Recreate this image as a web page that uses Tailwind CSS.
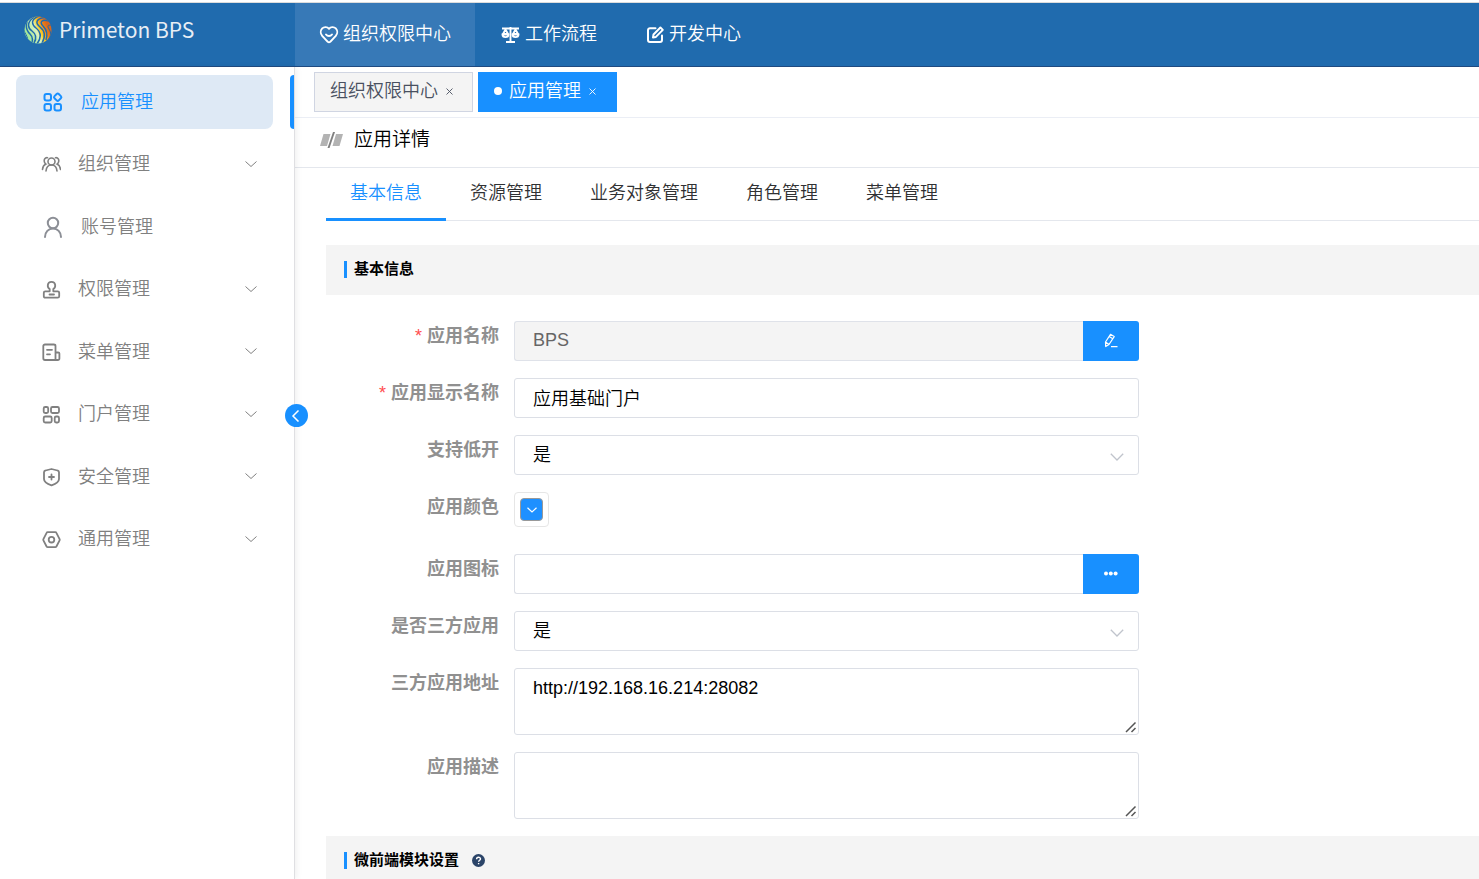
<!DOCTYPE html>
<html lang="zh-CN">
  <head>
    <meta charset="utf-8" />
    <title>Primeton BPS</title>
    <script src="https://cdn.jsdelivr.net/npm/@tailwindcss/browser@4"></script>
  </head>
  <body class="h-screen flex flex-col overflow-hidden bg-white font-['Liberation_Sans','Noto_Sans_CJK_SC',sans-serif] text-[18px] font-[350] text-black">
    <!-- top bar -->
    <header class="shrink-0 flex mt-0.5 h-[65px] border-t border-t-[#dcdcdc] border-b border-b-[#1f4a80] bg-[#206bae] text-white">
      <a href="#" class="w-[295px] shrink-0 flex items-center gap-[7px] pl-6 pb-2.5">
        <svg class="w-7 h-7" viewBox="0 0 28 28" fill="none">
          <defs>
            <linearGradient id="ball" x1="0.15" y1="0.65" x2="0.85" y2="0.35">
              <stop offset="0" stop-color="#a4e89a" />
              <stop offset="0.42" stop-color="#dcf2c0" />
              <stop offset="0.58" stop-color="#f9d02a" />
              <stop offset="0.8" stop-color="#f08a16" />
              <stop offset="1" stop-color="#d9661c" />
            </linearGradient>
            <clipPath id="disc"><circle cx="14" cy="14" r="13.5" /></clipPath>
          </defs>
          <circle cx="14" cy="14" r="13.500" fill="url(#ball)" />
          <g clip-path="url(#disc)" stroke="#206bae" stroke-width="1.500">
            <path d="M15 0C7 3 7 8 12 12s6 9 1 16" />
            <path d="M20 1.500C12 3 11 7 16 11s6 9 2 16" />
            <path d="M25 5c-7-2-10 1-6 5s5 8 3 14" />
            <path d="M10 1C2 7 4 12 8 15s5 7 2 12" />
            <path d="M3 6c-2 6 0 9 3 12s3 5 2 8" />
            <path d="M28 10c-4-2-5 0-3 3s2 5 1 8" stroke-width="1" />
            <path d="M0 14c1 4 3 5 4 10" stroke-width="1" />
          </g>
        </svg>
        <span class="font-['Noto_Sans_CJK_SC',sans-serif] text-[21px] font-normal text-[#e8eef5]">Primeton BPS</span>
      </a>
      <nav class="flex gap-0.5">
        <a href="#" class="flex items-center gap-1 px-6 bg-[#3779b7]">
          <svg class="w-5 h-5" viewBox="0 0 20 20" fill="none" stroke="currentColor" stroke-width="1.900" stroke-linecap="round" stroke-linejoin="round">
            <path d="M10 3.800C8.300 1.600 5 1.600 3.200 3.400 1.300 5.400 1.300 8.700 3.200 10.800c1.800 2 3.800 4.300 5.500 5.900.8.600 1.800.6 2.600 0 1.700-1.600 3.700-3.900 5.500-5.900 1.900-2.100 1.900-5.400 0-7.400C15 1.600 11.700 1.600 10 3.800z" />
            <path d="M7 9.500c1.500 2 4.500 2 6 0" />
          </svg>
          组织权限中心
        </a>
        <a href="#" class="flex items-center gap-1 px-6">
          <svg class="w-5 h-5" viewBox="0 0 20 20" fill="none" stroke="currentColor" stroke-width="1.900">
            <path d="M1 3.500h17M9.500 2v15M5 17h9" />
            <path d="M4.500 4.500L2 9h5zM14.500 4.500L12 9h5z" stroke-linejoin="round" />
            <path d="M1.500 9.500c0 3.500 6 3.500 6 0zM11.500 9.500c0 3.500 6 3.500 6 0z" />
          </svg>
          工作流程
        </a>
        <a href="#" class="flex items-center gap-1 px-6">
          <svg class="w-[18px] h-[18px]" viewBox="0 0 18 18" fill="none" stroke="currentColor" stroke-width="2" stroke-linecap="round" stroke-linejoin="round">
            <path d="M8.500 2.200H3a2 2 0 0 0-2 2V14a2 2 0 0 0 2 2h10a2 2 0 0 0 2-2V9.500" />
            <path d="M6 11.500l.5-3 6.900-7 2.400 2.400-6.900 7z" />
          </svg>
          开发中心
        </a>
      </nav>
    </header>

    <div class="flex flex-1 min-h-0">
      <!-- side menu -->
      <aside class="relative z-10 w-[295px] shrink-0 border-r border-[#dfdfe2] bg-white pt-1 shadow-[2px_0_6px_rgba(0,0,0,0.06)]">
        <span class="absolute right-0 top-2 w-1 h-[54px] rounded-l bg-[#1890ff]"></span>
        <nav class="grid auto-rows-fr items-center min-h-[500px] pl-4 pr-[21px] text-[#808080]">
          <a href="#" class="flex items-center h-[54px] rounded-lg bg-[#dee9f5] pl-[26px] gap-[17px] text-[#1890ff]">
            <svg class="w-[22px] h-[22px]" viewBox="0 0 22 22" fill="none" stroke="currentColor" stroke-width="2">
              <rect x="2.500" y="3" width="6.500" height="6.500" rx="2" />
              <rect x="2.500" y="13" width="6.500" height="6.500" rx="2" />
              <rect x="12.500" y="13" width="6.500" height="6.500" rx="2" />
              <rect x="12.700" y="3.200" width="6" height="6" rx="1.500" transform="rotate(45 15.700 6.200)" />
            </svg>
            <span>应用管理</span>
          </a>
          <a href="#" class="flex items-center h-[54px] pl-[25px] pr-4 gap-[17px]">
            <svg class="w-5 h-5" viewBox="0 0 20 20" fill="none" stroke="currentColor" stroke-width="1.600" stroke-linecap="round">
              <circle cx="10.500" cy="6.500" r="3.500" />
              <path d="M5 16c.3-3.500 2.500-6 5.500-6s5.200 2.500 5.500 6M6.500 2.700C3.800 2.300 2.700 5 3.500 7.200c.3.900.8 1.500 1.400 1.900C2.800 10 1.700 12 1.500 14.500M14.500 2.700c2.700-.4 3.800 2.300 3 4.500-.3.900-.8 1.500-1.400 1.900 2.100.9 3.200 2.900 3.400 5.400" />
            </svg>
            <span class="flex-1">组织管理</span>
            <svg class="w-3 h-2 mb-0.5" viewBox="0 0 12 8" fill="none" stroke="currentColor"><path d="M.5 1.500L6 6.500l5.500-5" /></svg>
          </a>
          <a href="#" class="flex items-center h-[54px] pl-[26px] gap-[17px]">
            <svg class="w-[22px] h-[22px]" viewBox="0 0 22 22" fill="none" stroke="#8c8f96" stroke-width="2" stroke-linecap="round">
              <circle cx="11" cy="7" r="5.200" />
              <path d="M3 21c0-5 3.500-8.500 8-8.500s8 3.500 8 8.500" />
            </svg>
            <span>账号管理</span>
          </a>
          <a href="#" class="flex items-center h-[54px] pl-[25px] pr-4 gap-[17px]">
            <svg class="w-5 h-5" viewBox="0 0 20 20" fill="none" stroke="currentColor" stroke-width="1.800" stroke-linecap="round" stroke-linejoin="round">
              <path d="M8.700 11.300V9C6 7.500 5.800 1.800 10.500 1.800S15 7.500 12.300 9v2.300h4.400c1 0 1.500.6 1.500 1.500v3.400c0 1-.5 1.500-1.500 1.500h-12.400c-1 0-1.500-.5-1.500-1.500v-3.400c0-.9.5-1.500 1.500-1.500zM8.500 14.500h4.500" />
            </svg>
            <span class="flex-1">权限管理</span>
            <svg class="w-3 h-2 mb-0.5" viewBox="0 0 12 8" fill="none" stroke="currentColor"><path d="M.5 1.500L6 6.500l5.500-5" /></svg>
          </a>
          <a href="#" class="flex items-center h-[54px] pl-[25px] pr-4 gap-[17px]">
            <svg class="w-5 h-5" viewBox="0 0 20 20" fill="none" stroke="currentColor" stroke-width="1.800" stroke-linecap="round" stroke-linejoin="round">
              <path d="M14.500 18H4a1.700 1.700 0 0 1-1.700-1.700V4c0-.9.700-1.500 1.700-1.500h8.800c1 0 1.700.6 1.700 1.500zM14.500 10.500h2.700c.7 0 1.200.4 1.200 1v5c0 .9-.7 1.500-1.700 1.500h-2.200M6 7.800h5M6 12.300h3" />
            </svg>
            <span class="flex-1">菜单管理</span>
            <svg class="w-3 h-2 mb-0.5" viewBox="0 0 12 8" fill="none" stroke="currentColor"><path d="M.5 1.500L6 6.500l5.500-5" /></svg>
          </a>
          <a href="#" class="flex items-center h-[54px] pl-[25px] pr-4 gap-[17px]">
            <svg class="w-5 h-5" viewBox="0 0 20 20" fill="none" stroke="currentColor" stroke-width="1.800">
              <rect x="2.700" y="2" width="4.500" height="6" rx="1.500" />
              <rect x="10" y="2" width="8" height="6" rx="1.500" />
              <rect x="2.700" y="11.500" width="8" height="6" rx="1.500" />
              <rect x="13.700" y="11.500" width="4.300" height="6" rx="1.500" />
            </svg>
            <span class="flex-1">门户管理</span>
            <svg class="w-3 h-2 mb-0.5" viewBox="0 0 12 8" fill="none" stroke="currentColor"><path d="M.5 1.500L6 6.500l5.500-5" /></svg>
          </a>
          <a href="#" class="flex items-center h-[54px] pl-[25px] pr-4 gap-[17px]">
            <svg class="w-5 h-5" viewBox="0 0 20 20" fill="none" stroke="currentColor" stroke-width="1.800" stroke-linecap="round" stroke-linejoin="round">
              <path d="M10.500 2l6 1.500c.9.200 1.500.8 1.500 1.700V12c0 3-3.300 5-7.500 6.300C6.300 17 3 15 3 12V5.200c0-.9.600-1.500 1.500-1.700zM10.500 7.500v5M8 10h5" />
            </svg>
            <span class="flex-1">安全管理</span>
            <svg class="w-3 h-2 mb-0.5" viewBox="0 0 12 8" fill="none" stroke="currentColor"><path d="M.5 1.500L6 6.500l5.500-5" /></svg>
          </a>
          <a href="#" class="flex items-center h-[54px] pl-[25px] pr-4 gap-[17px]">
            <svg class="w-5 h-5" viewBox="0 0 20 20" fill="none" stroke="currentColor" stroke-width="1.800" stroke-linejoin="round">
              <path d="M6.700 2.200h7.600c.5 0 .9.200 1.100.7l3.200 6.200c.2.400.2.800 0 1.200l-3.200 6.200c-.2.500-.6.700-1.100.7H6.700c-.5 0-.9-.2-1.100-.7L2.400 10.300c-.2-.4-.2-.8 0-1.200l3.200-6.200c.2-.5.6-.7 1.100-.7z" />
              <circle cx="10.500" cy="9.700" r="2.800" />
            </svg>
            <span class="flex-1">通用管理</span>
            <svg class="w-3 h-2 mb-0.5" viewBox="0 0 12 8" fill="none" stroke="currentColor"><path d="M.5 1.500L6 6.500l5.500-5" /></svg>
          </a>
        </nav>
        <button type="button" aria-label="收起菜单" class="absolute -right-3.5 top-[337px] w-[23px] h-[23px] pr-0.5 rounded-full bg-[#1890ff] text-white flex items-center justify-center">
          <svg class="w-3 h-3" viewBox="0 0 12 12" fill="none" stroke="currentColor" stroke-width="1.500"><path d="M8.500 .5L3 6l5.500 5.500" /></svg>
        </button>
      </aside>

      <main class="flex-1 min-w-0 overflow-y-auto [scrollbar-width:none]">
        <!-- opened pages -->
        <div class="flex gap-[5px] h-[51px] pt-[5px] pl-[19px] border-b border-[#ebeef5]">
          <div class="flex items-center h-10 w-[159px] pl-[15px] pb-0.5 gap-2 border border-[#d0d5e2] bg-[#f4f4f4] text-[#495060]">
            <a href="#">组织权限中心</a>
            <button type="button" aria-label="关闭">
              <svg class="w-[7px] h-[7px]" viewBox="0 0 7 7" stroke="currentColor" stroke-width="0.900"><path d="M.5 .5l6 6M6.500 .5l-6 6" /></svg>
            </button>
          </div>
          <div class="flex items-center h-10 w-[139px] pl-4 pb-0.5 gap-2 bg-[#1890ff] text-white">
            <a href="#" class="flex items-center gap-[7px]"><span class="w-2 h-2 rounded-full bg-white"></span>应用管理</a>
            <button type="button" aria-label="关闭">
              <svg class="w-[7px] h-[7px]" viewBox="0 0 7 7" stroke="currentColor" stroke-width="0.900"><path d="M.5 .5l6 6M6.500 .5l-6 6" /></svg>
            </button>
          </div>
        </div>

        <div class="flex items-center gap-2.5 h-[50px] pl-[25px] pb-1 border-b border-[#e4e7ed]">
          <svg class="w-6 h-[18px]" viewBox="0 0 24 18">
            <path d="M3.500 2h7L7 14H0zM16 2h7l-3.500 12h-7z" fill="#b3b3b3" />
            <path d="M13 0h2L9.500 16h-2z" fill="#808080" />
          </svg>
          <h1 class="text-[19px]">应用详情</h1>
        </div>

        <div class="pl-[31px]">
          <nav class="flex h-[53px] mb-6 border-b border-[#e4e7ed] text-[#303133]">
            <a href="#" class="h-[53px] px-6 leading-[50px] border-b-3 border-[#1890ff] text-[#1890ff]">基本信息</a>
            <a href="#" class="px-6 leading-[50px]">资源管理</a>
            <a href="#" class="px-6 leading-[50px]">业务对象管理</a>
            <a href="#" class="px-6 leading-[50px]">角色管理</a>
            <a href="#" class="px-6 leading-[50px]">菜单管理</a>
          </nav>

          <div class="flex items-center gap-[7px] h-[50px] pl-[18px] pb-0.5 bg-[#f4f4f4]">
            <span class="w-[3px] h-[17px] bg-[#1890ff]"></span>
            <h2 class="text-[15px] font-bold">基本信息</h2>
          </div>

          <form class="flex flex-col gap-[17px] max-w-[813px] pt-[26px] pb-[17px]">
            <div class="flex gap-[15px]">
              <label for="name" class="w-[173px] shrink-0 text-right leading-[30px] font-bold text-[#909090]"><span class="font-normal text-[#ff4d4f]">*</span> 应用名称</label>
              <div class="flex flex-1">
                <input id="name" type="text" value="BPS" disabled class="flex-1 min-w-0 h-10 pl-[18px] pb-0.5 border border-r-0 border-[#dfe2e9] rounded-l-[3px] bg-[#f4f4f4] text-[#666]" />
                <button type="button" aria-label="编辑" class="w-14 h-10 rounded-r-[3px] bg-[#1890ff] text-white flex items-center justify-center">
                  <svg class="w-4 h-4" viewBox="0 0 16 16" fill="none" stroke="currentColor" stroke-width="1.200" stroke-linejoin="round">
                    <path d="M2.500 9L7.500 1.300l3.700 2.300L6 11.500l-3.300 2zM6.200 3.400l3.600 2.300M2.500 9L6 11.500M8 13.700h6.500" />
                  </svg>
                </button>
              </div>
            </div>
            <div class="flex gap-[15px]">
              <label for="title" class="w-[173px] shrink-0 text-right leading-[30px] font-bold text-[#909090]"><span class="font-normal text-[#ff4d4f]">*</span> 应用显示名称</label>
              <input id="title" type="text" value="应用基础门户" class="flex-1 min-w-0 h-10 pl-[18px] pb-0.5 border border-[#dcdfe6] rounded-[3px]" />
            </div>
            <div class="flex gap-[15px]">
              <label for="lowcode" class="w-[173px] shrink-0 text-right leading-[30px] font-bold text-[#909090]">支持低开</label>
              <div class="relative flex-1">
                <select id="lowcode" class="appearance-none w-full h-10 pl-[18px] border border-[#dcdfe6] rounded-[3px] bg-white">
                  <option>是</option>
                  <option>否</option>
                </select>
                <svg class="pointer-events-none absolute right-[15px] top-[18px] w-3.5 h-2" viewBox="0 0 14 8" fill="none" stroke="#c0c4cc" stroke-width="1.300"><path d="M.8 .8L7 7l6.200-6.200" /></svg>
              </div>
            </div>
            <div class="flex gap-[15px] h-[45px]">
              <span class="w-[173px] shrink-0 text-right leading-[30px] font-bold text-[#909090]">应用颜色</span>
              <button type="button" aria-label="应用颜色" class="w-[35px] h-[35px] p-[5px] border border-[#e6e6e6] rounded">
                <span class="flex items-center justify-center w-[23px] h-[23px] border border-[#999] rounded-sm bg-[#1e90ff]">
                  <svg class="w-2.5 h-1.5" viewBox="0 0 10 6" fill="none" stroke="#fff" stroke-width="1.200"><path d="M.5 .8L5 5l4.500-4.200" /></svg>
                </span>
              </button>
            </div>
            <div class="flex gap-[15px]">
              <label for="icon" class="w-[173px] shrink-0 text-right leading-[30px] font-bold text-[#909090]">应用图标</label>
              <div class="flex flex-1">
                <input id="icon" type="text" class="flex-1 min-w-0 h-10 pl-[18px] pb-0.5 border border-r-0 border-[#dcdfe6] rounded-l-[3px]" />
                <button type="button" aria-label="选择图标" class="w-14 h-10 rounded-r-[3px] bg-[#1890ff] flex items-center justify-center">
                  <svg class="w-4 h-4" viewBox="0 0 16 16" fill="#fff"><circle cx="3" cy="7.500" r="2" /><circle cx="7.800" cy="7.500" r="2" /><circle cx="12.600" cy="7.500" r="2" /></svg>
                </button>
              </div>
            </div>
            <div class="flex gap-[15px]">
              <label for="third" class="w-[173px] shrink-0 text-right leading-[30px] font-bold text-[#909090]">是否三方应用</label>
              <div class="relative flex-1">
                <select id="third" class="appearance-none w-full h-10 pl-[18px] border border-[#dcdfe6] rounded-[3px] bg-white">
                  <option>是</option>
                  <option>否</option>
                </select>
                <svg class="pointer-events-none absolute right-[15px] top-[18px] w-3.5 h-2" viewBox="0 0 14 8" fill="none" stroke="#c0c4cc" stroke-width="1.300"><path d="M.8 .8L7 7l6.200-6.200" /></svg>
              </div>
            </div>
            <div class="flex gap-[15px]">
              <label for="url" class="w-[173px] shrink-0 text-right leading-[30px] font-bold text-[#909090]">三方应用地址</label>
              <div class="relative flex flex-1">
                <textarea id="url" class="flex-1 min-w-0 h-[67px] px-[18px] py-1.5 leading-[26px] border border-[#dcdfe6] rounded-[3px] resize-y">http://192.168.16.214:28082</textarea>
                <svg class="pointer-events-none absolute right-0.5 bottom-0.5 w-3 h-3 bg-white" viewBox="0 0 12 12" stroke="#555" stroke-width="1.500"><path d="M1 11L10.500 1.500M6.500 11l4-4" /></svg>
              </div>
            </div>
            <div class="flex gap-[15px]">
              <label for="desc" class="w-[173px] shrink-0 text-right leading-[30px] font-bold text-[#909090]">应用描述</label>
              <div class="relative flex flex-1">
                <textarea id="desc" class="flex-1 min-w-0 h-[67px] px-[18px] py-1.5 leading-[26px] border border-[#dcdfe6] rounded-[3px] resize-y"></textarea>
                <svg class="pointer-events-none absolute right-0.5 bottom-0.5 w-3 h-3 bg-white" viewBox="0 0 12 12" stroke="#555" stroke-width="1.500"><path d="M1 11L10.500 1.500M6.500 11l4-4" /></svg>
              </div>
            </div>
          </form>

          <div class="flex items-center gap-[7px] h-[50px] pl-[18px] pb-0.5 bg-[#f4f4f4]">
            <span class="w-[3px] h-[17px] bg-[#1890ff]"></span>
            <h2 class="text-[15px] font-bold">微前端模块设置</h2>
            <svg class="w-[13px] h-[13px] ml-1.5" viewBox="0 0 13 13" fill="none">
              <circle cx="6.500" cy="6.500" r="6.500" fill="#2b4468" />
              <path d="M4.600 5.200c0-2.600 3.900-2.500 3.900-.2 0 1.300-1.900 1.300-1.900 2.700M6.600 9v1.300" stroke="#fff" stroke-width="1.400" />
            </svg>
          </div>
        </div>
      </main>
    </div>
  </body>
</html>
